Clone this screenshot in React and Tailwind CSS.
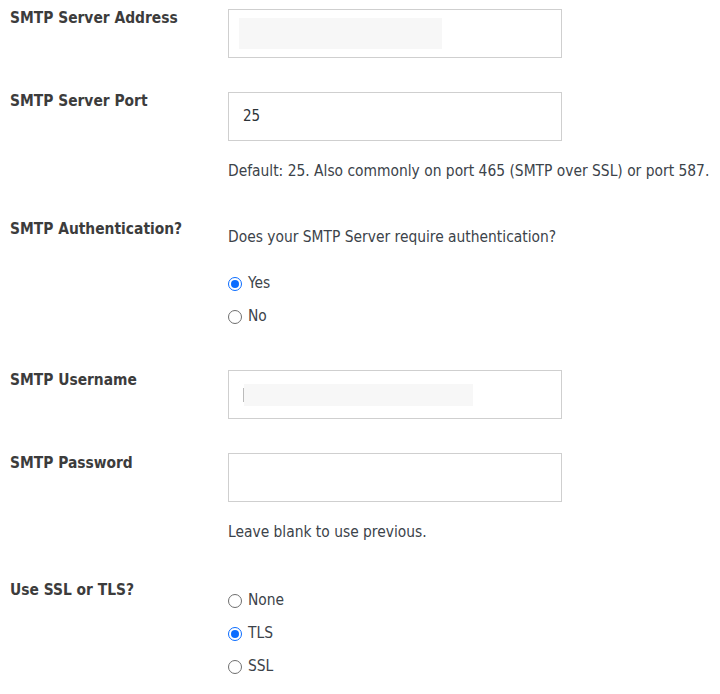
import React from 'react';

const font = { fontFamily: '"DejaVu Sans Condensed", "DejaVu Sans", sans-serif' };

const Label = ({ children, className = '' }) => (
  <div className={`w-[218px] shrink-0 text-[15.4px] leading-5 font-bold text-[#3c3c3c] ${className}`}>
    {children}
  </div>
);

const TextBox = ({ children }) => (
  <div className="w-[334px] h-[49px] border border-[#cfcfcf] bg-white flex items-center px-[14px] text-[15px] text-[#2c3338]">
    {children}
  </div>
);

const Radio = ({ label, checked }) => (
  <label className="flex items-center gap-[6px] h-5 text-[15.4px] text-[#3c434a]">
    {checked ? (
      <span className="w-[14px] h-[14px] rounded-full border-[1.5px] border-[#0a6cff] flex items-center justify-center">
        <span className="w-[8px] h-[8px] rounded-full bg-[#0a6cff]" />
      </span>
    ) : (
      <span className="w-[14px] h-[14px] rounded-full border border-[#6e6e6e] bg-white" />
    )}
    {label}
  </label>
);

export default function App() {
  return (
    <div className="bg-white w-[720px] h-[694px] overflow-hidden pl-[10px] pt-[9px]" style={font}>
      {/* SMTP Server Address */}
      <div className="flex items-start">
        <Label className="mt-[-1px]">SMTP Server Address</Label>
        <TextBox>
          <span className="block w-[203px] h-[31px] bg-[#f7f7f7] -ml-[4px]" />
        </TextBox>
      </div>

      {/* SMTP Server Port */}
      <div className="flex items-start mt-[34px]">
        <Label className="mt-[-1px]">SMTP Server Port</Label>
        <div>
          <TextBox>25</TextBox>
          <p className="mt-[20px] text-[15.4px] leading-5 text-[#3c434a] whitespace-nowrap">
            Default: 25. Also commonly on port 465 (SMTP over SSL) or port 587.
          </p>
        </div>
      </div>

      {/* SMTP Authentication */}
      <div className="flex items-start mt-[38px]">
        <Label>SMTP Authentication?</Label>
        <div className="pt-[8px]">
          <p className="text-[15.4px] leading-5 text-[#3c434a]">Does your SMTP Server require authentication?</p>
          <div className="mt-[27px] flex flex-col gap-[13px]">
            <Radio label="Yes" checked />
            <Radio label="No" />
          </div>
        </div>
      </div>

      {/* SMTP Username */}
      <div className="flex items-start mt-[43px]">
        <Label>SMTP Username</Label>
        <TextBox>
          <span className="block w-px h-[14px] bg-[#bbb]" />
          <span className="block w-[229px] h-[22px] bg-[#f7f7f7]" />
        </TextBox>
      </div>

      {/* SMTP Password */}
      <div className="flex items-start mt-[34px]">
        <Label>SMTP Password</Label>
        <div>
          <TextBox />
          <p className="mt-[20px] text-[15.4px] leading-5 text-[#3c434a]">Leave blank to use previous.</p>
        </div>
      </div>

      {/* SSL / TLS */}
      <div className="flex items-start mt-[38px]">
        <Label>Use SSL or TLS?</Label>
        <div className="pt-[11px] flex flex-col gap-[13px]">
          <Radio label="None" />
          <Radio label="TLS" checked />
          <Radio label="SSL" />
        </div>
      </div>
    </div>
  );
}
